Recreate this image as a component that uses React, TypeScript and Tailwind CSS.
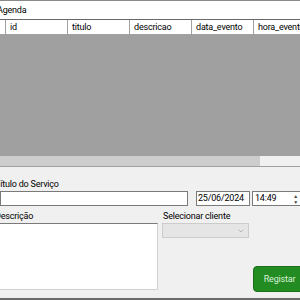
import { ChevronDown } from 'lucide-react';

const columns = ['id', 'titulo', 'descricao', 'data_evento', 'hora_evento'];

export default function App() {
    return (
        <div className="w-[300px] h-[300px] overflow-hidden bg-[#f0f0f0] flex flex-col text-[9px] tracking-[-0.2px] text-black font-['Roboto',sans-serif]">
            <div className="h-[1px] bg-[#8a8a8a]" />
            <div className="h-[18px] bg-white flex items-center -ml-[3px] leading-none">Agenda</div>

            {/* grid */}
            <div className="border-t border-[#696969] bg-[#a0a0a0] h-[147px] flex flex-col">
                <div className="flex h-[14px] bg-white leading-none">
                    <div className="w-[6px] shrink-0 border-r border-[#a0a0a0]" />
                    {columns.map((c) => (
                        <div key={c} className="w-[62px] shrink-0 border-r border-[#a0a0a0] pl-[4px] flex items-center whitespace-nowrap overflow-hidden">
                            {c}
                        </div>
                    ))}
                </div>
                <div className="flex-1" />
                <div className="h-[10px] flex">
                    <div className="w-[260px] bg-[#cdcdcd]" />
                    <div className="flex-1 bg-[#f0f0f0]" />
                </div>
            </div>
            <div className="h-[1px] bg-[#a0a0a0]" />

            {/* form */}
            <div className="flex-1 flex flex-col">
                <div className="mt-[12px] -ml-[5px] h-[11px] leading-none flex items-center">Título do Serviço</div>
                <div className="flex items-center mt-[1px]">
                    <div className="w-[188px] shrink-0 h-[15px] bg-white border border-[#7a7a7a]" />
                    <div className="w-[54px] shrink-0 ml-[8px] h-[15px] bg-white border border-[#7a7a7a] flex items-center justify-between pl-[1px] pr-[2px] leading-none">
                        25/06/2024
                        <ChevronDown size={8} strokeWidth={1.5} className="text-[#606060]" />
                    </div>
                    <div className="w-[49px] shrink-0 ml-[2px] h-[15px] bg-white border border-[#7a7a7a] flex items-center justify-between pl-[2px] leading-none">
                        14:49
                        <div className="w-[7px] h-full flex flex-col items-center justify-center text-[5px] leading-[6px] text-[#404040] mr-[1px]">
                            <span>▲</span>
                            <span>▼</span>
                        </div>
                    </div>
                </div>

                <div className="flex mt-[5px]">
                    <div className="w-[158px] flex flex-col">
                        <div className="-ml-[5px] h-[11px] leading-none flex items-center">Descrição</div>
                        <div className="mt-[1px] h-[67px] bg-white border-t border-[#7a7a7a] border-r border-b border-r-[#d0d0d0] border-b-[#d0d0d0]" />
                    </div>
                    <div className="flex-1 flex flex-col pl-[4px]">
                        <div className="ml-[1px] h-[11px] leading-none flex items-center">Selecionar cliente</div>
                        <div className="mt-[1px] w-[87px] h-[15px] bg-[#e5e5e5] border border-[#cccccc] flex items-center justify-end pr-[3px]">
                            <ChevronDown size={8} strokeWidth={1.5} className="text-[#8a8a8a]" />
                        </div>
                        <div className="flex justify-end mt-[28px] -mr-[6px]">
                            <div className="w-[53px] h-[26px] bg-[#228b22] rounded-[4px] border border-[#1a6f1a] flex items-center justify-center text-[#d8f0d8] leading-none">
                                Registar
                            </div>
                        </div>
                    </div>
                </div>
            </div>
            <div className="h-[2px] bg-[#6a6a6a]" />
        </div>
    );
}
